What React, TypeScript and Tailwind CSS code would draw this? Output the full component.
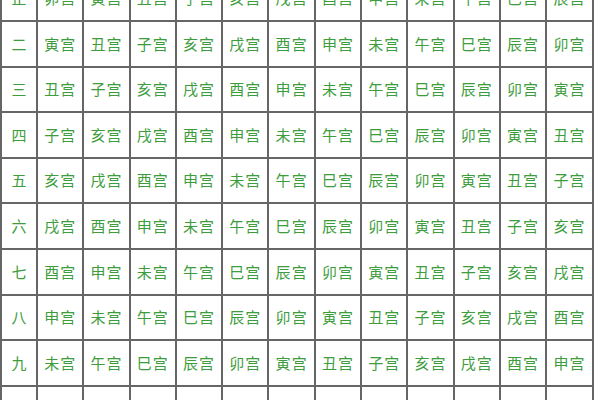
import { Fragment } from "react";

const branches = ["卯", "寅", "丑", "子", "亥", "戌", "酉", "申", "未", "午", "巳", "辰"];
const labels = ["正", "二", "三", "四", "五", "六", "七", "八", "九", "十"];

export default function App() {
  return (
    <div className="w-[600px] h-[400px] overflow-hidden bg-white">
      <div
        className="mt-[-25.6px] w-fit grid grid-cols-[34px_repeat(12,44.3px)] auto-rows-[43.6px] gap-[2px] p-[2px] bg-[#666666]"
        style={{ fontFamily: '"Noto Sans CJK SC", "Noto Sans", sans-serif' }}
      >
        {labels.map((label, r) => (
          <Fragment key={label}>
            <div className="bg-white flex items-center justify-center text-[15px] text-[#3d9d3d]">
              {label}
            </div>
            {branches.map((_, c) => (
              <div
                key={c}
                className="bg-white flex items-center justify-center text-[15px] text-[#3d9d3d] tracking-[1px]"
              >
                {branches[(r + c) % 12]}宫
              </div>
            ))}
          </Fragment>
        ))}
      </div>
    </div>
  );
}
